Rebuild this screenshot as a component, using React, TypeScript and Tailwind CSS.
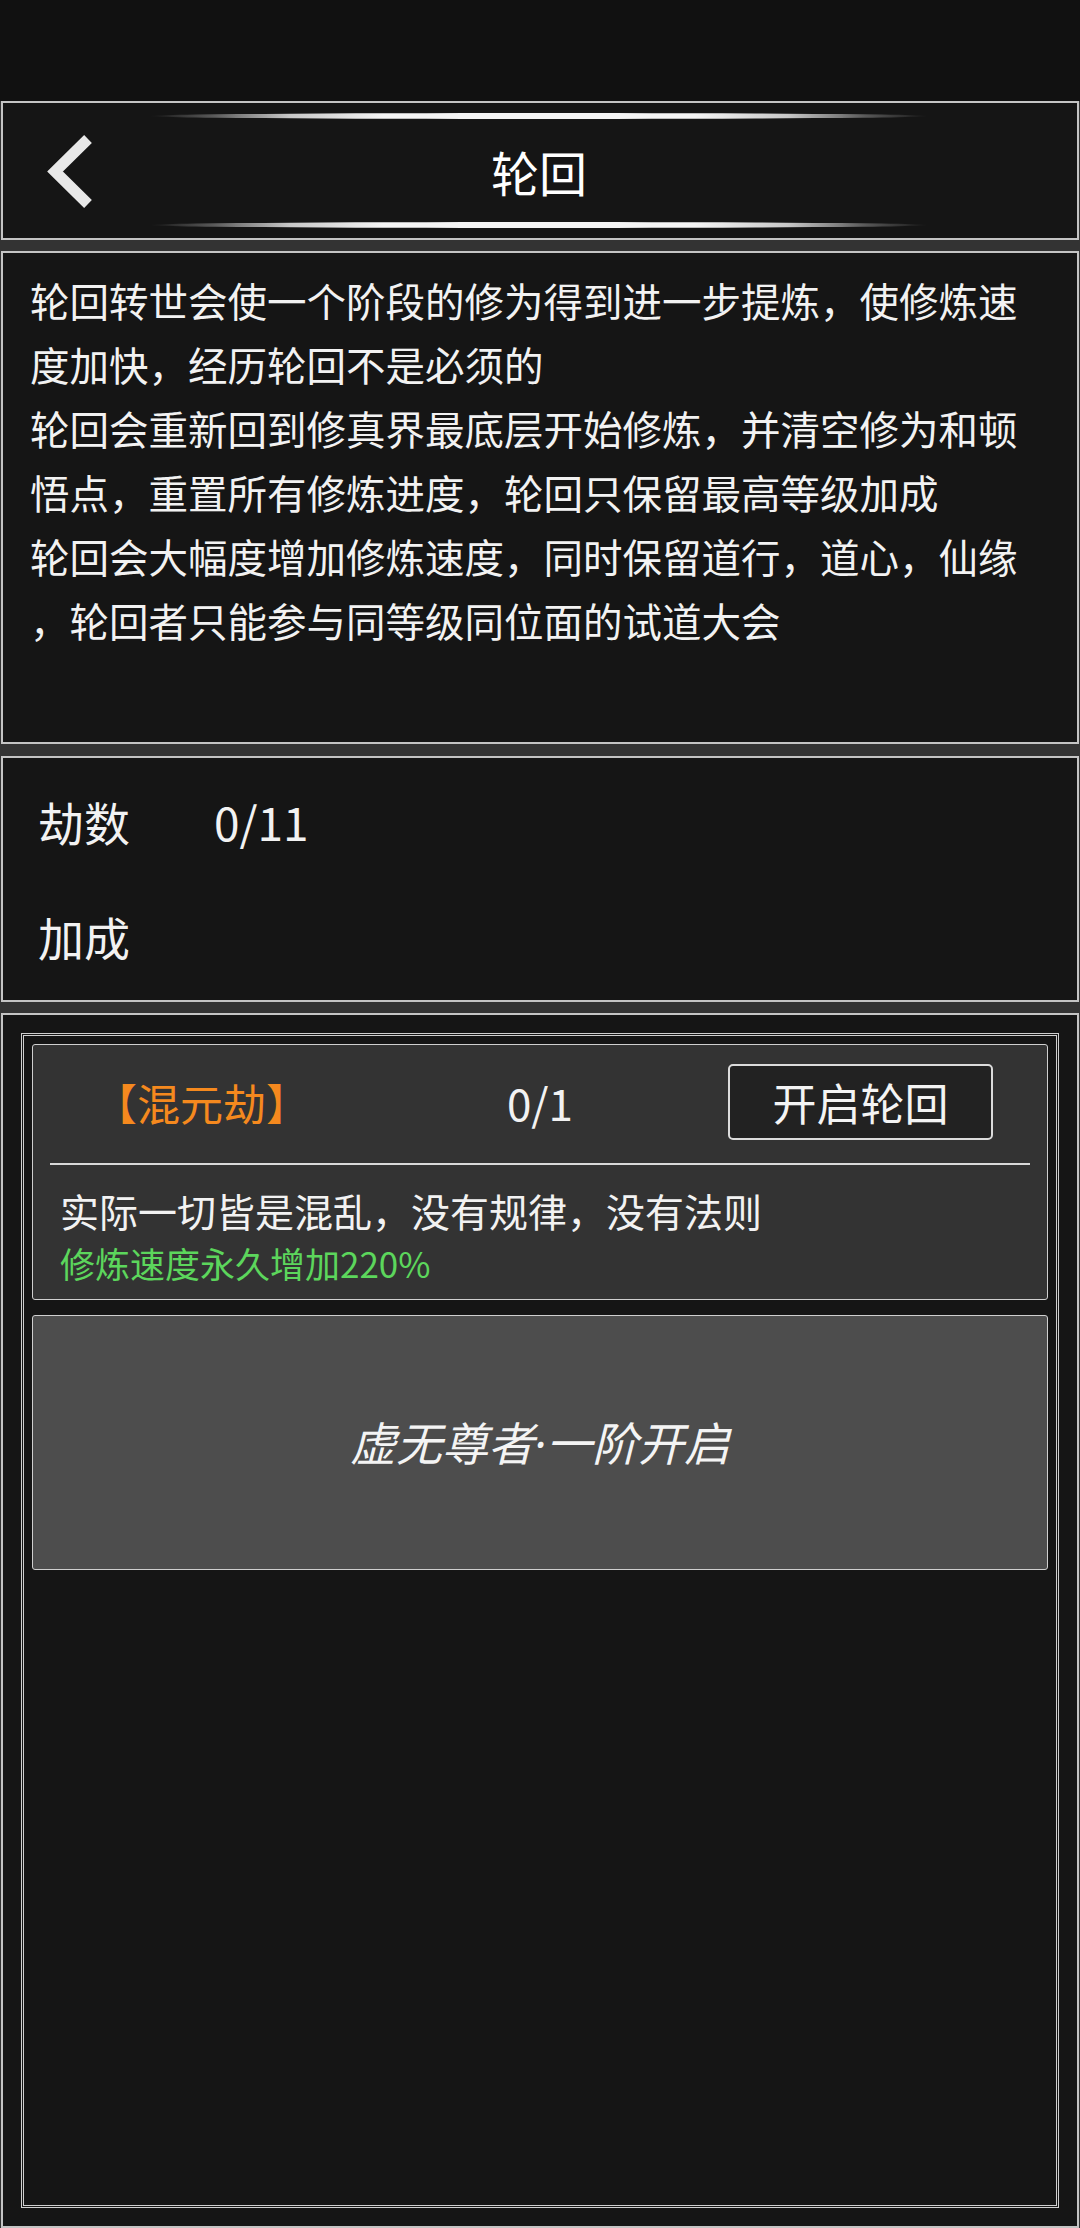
import React from 'react';

const descLines = [
  '轮回转世会使一个阶段的修为得到进一步提炼，使修炼速',
  '度加快，经历轮回不是必须的',
  '轮回会重新回到修真界最底层开始修炼，并清空修为和顿',
  '悟点，重置所有修炼进度，轮回只保留最高等级加成',
  '轮回会大幅度增加修炼速度，同时保留道行，道心，仙缘',
  '，轮回者只能参与同等级同位面的试道大会',
];

const panel = 'mx-px border-2 border-[#c4c4c4] bg-[#151515] shrink-0';

const GlowLine: React.FC = () => (
  <div className="h-[6px] w-full rounded-[50%] bg-[linear-gradient(to_right,rgba(160,160,160,0)_0%,rgba(170,170,170,0.45)_8%,#c8c8c8_18%,#f4f4f4_30%,#f4f4f4_70%,#c8c8c8_82%,rgba(170,170,170,0.45)_92%,rgba(160,160,160,0)_100%)]" />
);

const Header: React.FC = () => (
  <div className={`${panel} h-[139px] grid grid-cols-[147px_778px_1fr]`}>
    {/* back */}
    <div className="flex items-center pl-[37px]">
      <svg width="60" height="90" viewBox="0 0 60 90">
        <path d="M48 13 L15 45.5 L48 78" fill="none" stroke="#e8e8e8" strokeWidth="11" strokeLinecap="butt" strokeLinejoin="miter" />
      </svg>
    </div>
    <div className="flex flex-col justify-between pt-[10px] pb-[10px]">
      <GlowLine />
      <div className="text-center text-[48px] leading-none text-white">轮回</div>
      <GlowLine />
    </div>
    <div />
  </div>
);

const App: React.FC = () => {
  return (
    <div className="w-[1080px] h-[2228px] bg-[#333] flex flex-col overflow-hidden font-['Noto_Sans_CJK_SC',sans-serif] text-[#f2f2f2]">
      {/* status bar */}
      <div className="h-[101px] bg-[#111] shrink-0" />

      <Header />

      {/* Description */}
      <div className={`${panel} mt-[11px] h-[493px] pt-[15px] pl-[27px]`}>
        {descLines.map((l, i) => (
          <div key={i} className="whitespace-nowrap text-[39.5px] leading-[64px]">{l}</div>
        ))}
      </div>

      {/* Stats */}
      <div className={`${panel} mt-[12px] h-[246px] pt-[6px] pl-[35px]`}>
        <div className="h-[115px] flex items-center text-[46px]">
          <span className="w-[176px]">劫数</span>
          <span>0/11</span>
        </div>
        <div className="h-[115px] flex items-center text-[46px]">
          <span className="w-[176px]">加成</span>
        </div>
      </div>

      {/* Stages */}
      <div className={`${panel} mt-[11px] flex-1 p-[18px]`}>
        <div className="h-full border-[3px] border-double border-[#cfcfcf] p-[8px]">
          <div className="border border-[#cfcfcf] rounded-[3px] bg-[#333] pt-[19px] pb-[11px]">
            <div className="grid grid-cols-[337px_1fr_337px] items-center h-[76px]">
              <div className="text-center text-[43px] text-[#f5891e]">【混元劫】</div>
              <div className="text-center text-[44px]">0/1</div>
              <div className="pl-[18px]">
                <button className="w-[265px] h-[76px] border-2 border-[#dcdcdc] rounded-[5px] bg-[#222] text-[44px] leading-none text-[#f4f4f4]">
                  开启轮回
                </button>
              </div>
            </div>
            <div className="mx-[17px] mt-[23px] h-[2px] bg-[#d9d9d9]" />
            <div className="pl-[27px] mt-[20px] text-[39px] leading-[50px] whitespace-nowrap">实际一切皆是混乱，没有规律，没有法则</div>
            <div className="pl-[27px] mt-[3px] text-[35px] leading-[50px] text-[#5cd65c] whitespace-nowrap">修炼速度永久增加220%</div>
          </div>

          <div className="mt-[15px] h-[255px] border border-[#cfcfcf] rounded-[3px] bg-[#4d4d4d] flex items-center justify-center">
            <span className="italic text-[46px] text-[#f4f4f4]">
              虚无尊者<span className="font-['Noto_Sans',sans-serif]">·</span>一阶开启
            </span>
          </div>
        </div>
      </div>
    </div>
  );
};

export default App;
